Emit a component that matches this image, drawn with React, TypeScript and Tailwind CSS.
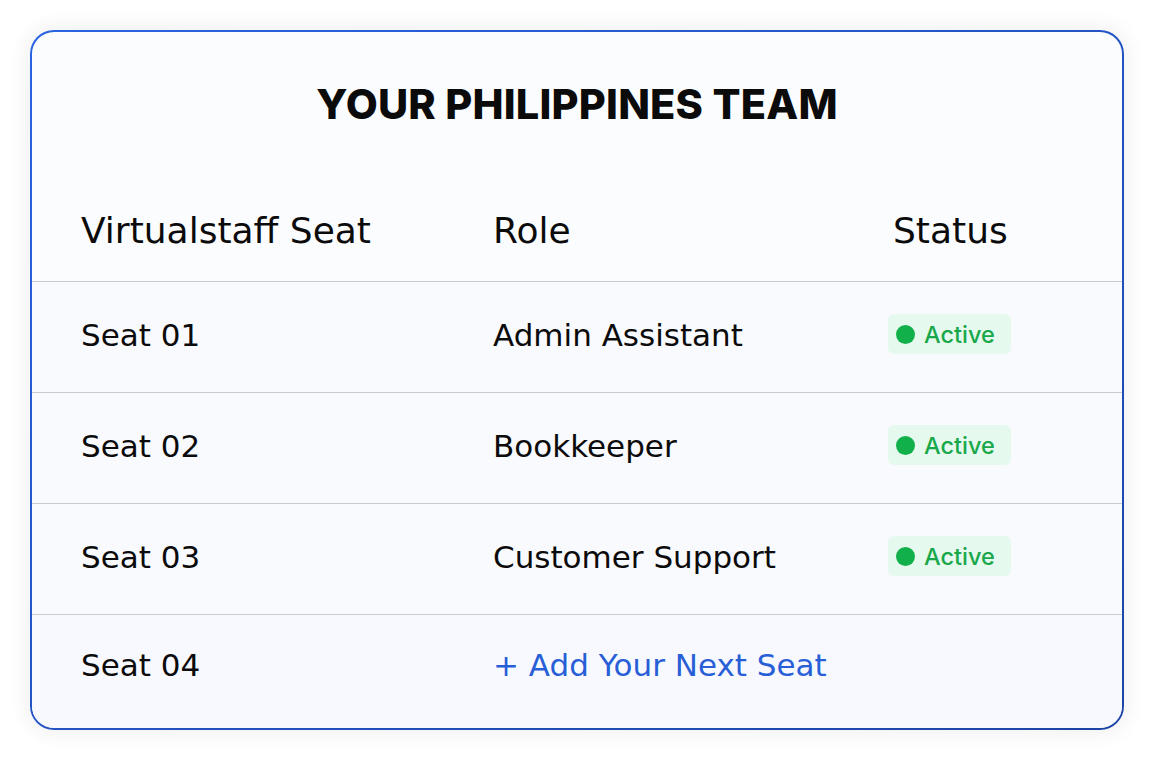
const rows = [
  { seat: 'Seat 01', role: 'Admin Assistant', active: true },
  { seat: 'Seat 02', role: 'Bookkeeper', active: true },
  { seat: 'Seat 03', role: 'Customer Support', active: true },
];

function StatusBadge() {
  return (
    <span className="inline-flex items-center gap-[9px] h-10 pl-2 pr-4 -translate-y-[2px] rounded-md bg-[#e6f9ee] text-[#18a84a] text-[23.5px] font-medium font-['Inter',sans-serif]">
      <span className="w-[19px] h-[19px] rounded-full bg-[#12b04a]" />
      Active
    </span>
  );
}

export default function App() {
  return (
    <div className="w-[1154px] h-[760px] bg-white p-[30px] font-['DejaVu_Sans','Open_Sans',sans-serif] text-[#0b0b0b]">
      <div className="h-full rounded-[24px] p-[2px] bg-gradient-to-br from-[#2a63e2] to-[#1c44a6] shadow-[0_0_18px_6px_rgba(0,0,0,0.05)]">
        <div className="h-full rounded-[22px] bg-[#fbfcfe] overflow-hidden flex flex-col">
          <div className="h-[249px] flex flex-col">
            <h1 className="pt-[50px] text-center text-[41.5px] leading-[44px] font-extrabold tracking-[0.2px] font-['Inter',sans-serif]">
              YOUR PHILIPPINES TEAM
            </h1>
            <div className="mt-auto pb-[30px] px-[49px] grid grid-cols-[407px_400px_1fr] text-[36px] leading-[40px]">
              <span>Virtualstaff Seat</span>
              <span className="pl-[5px]">Role</span>
              <span className="pl-[5px]">Status</span>
            </div>
          </div>
          {rows.map((r) => (
            <div
              key={r.seat}
              className="h-[111px] border-t border-[#c9cbd1] px-[49px] pb-[4px] grid grid-cols-[407px_400px_1fr] items-center text-[31px] bg-[#f9fafe]"
            >
              <span>{r.seat}</span>
              <span className="pl-[5px]">{r.role}</span>
              <span>{r.active && <StatusBadge />}</span>
            </div>
          ))}
          <div className="flex-1 border-t border-[#c9cbd1] px-[49px] pb-[12px] grid grid-cols-[407px_400px_1fr] items-center text-[31px] bg-[#f8f9fe]">
            <span>Seat 04</span>
            <span className="pl-[5px] text-[#285fd7]">+ Add Your Next Seat</span>
            <span />
          </div>
        </div>
      </div>
    </div>
  );
}
